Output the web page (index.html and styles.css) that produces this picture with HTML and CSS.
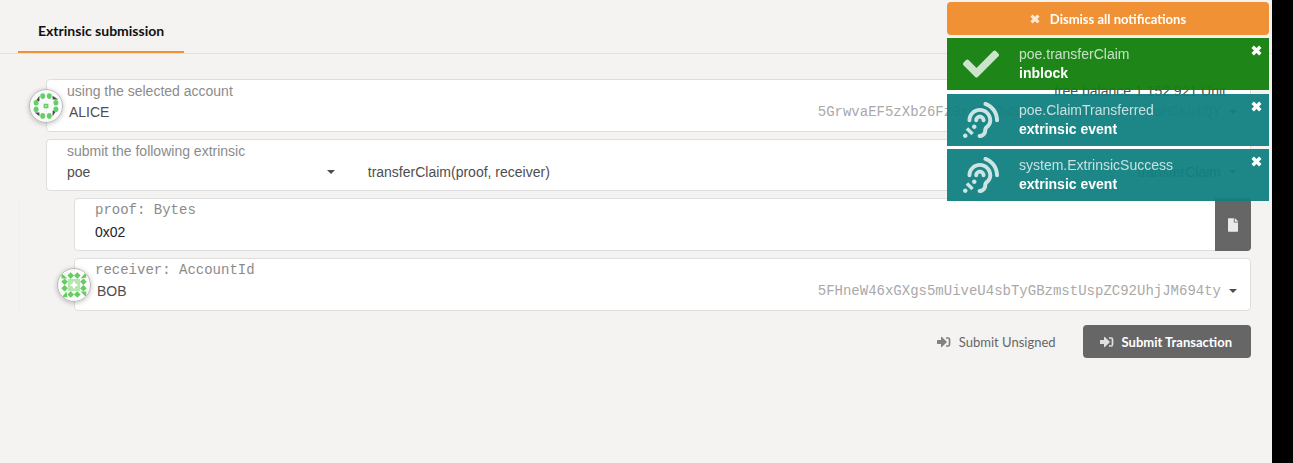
FILE: index.html
```html
<!DOCTYPE html>
<html lang="en">
<head>
<meta charset="utf-8">
<title>Extrinsic submission</title>
<link rel="stylesheet" href="styles.css">
</head>
<body>
<svg class="sprite" aria-hidden="true">
  <symbol id="times" viewBox="0 0 11 11"><path d="M1.700 1.700l7.600 7.600M9.300 1.700l-7.600 7.600" fill="none" stroke="currentColor" stroke-width="3.400"/></symbol>
  <symbol id="check" viewBox="0 0 512 512"><path d="M173.898 439.404l-166.4-166.4c-9.997-9.997-9.997-26.206 0-36.204l36.203-36.204c9.997-9.998 26.207-9.998 36.204 0L192 312.69 432.095 72.596c9.997-9.997 26.207-9.997 36.204 0l36.203 36.204c9.997 9.997 9.997 26.206 0 36.204l-294.4 294.401c-9.998 9.997-26.207 9.997-36.204-.001z"/></symbol>
  <symbol id="listening" viewBox="0 0 512 512"><path d="M216 260c0 15.464-12.536 28-28 28s-28-12.536-28-28c0-44.112 35.888-80 80-80s80 35.888 80 80c0 15.464-12.536 28-28 28s-28-12.536-28-28c0-13.234-10.767-24-24-24s-24 10.766-24 24zm24-176c-97.047 0-176 78.953-176 176 0 15.464 12.536 28 28 28s28-12.536 28-28c0-66.168 53.832-120 120-120s120 53.832 120 120c0 75.164-71.009 70.311-71.997 143.622L288 404c0 28.673-23.327 52-52 52-15.464 0-28 12.536-28 28s12.536 28 28 28c59.475 0 107.876-48.328 108-107.774.595-34.428 72-48.24 72-144.226 0-97.047-78.953-176-176-176zm-80 236c-17.673 0-32 14.327-32 32s14.327 32 32 32 32-14.327 32-32-14.327-32-32-32zM32 448c-17.673 0-32 14.327-32 32s14.327 32 32 32 32-14.327 32-32-14.327-32-32-32zm480-187.993c0-1.518-.012-3.025-.045-4.531C510.076 140.525 436.157 38.47 327.994 1.511c-14.633-4.998-30.549 2.809-35.55 17.442-5 14.633 2.81 30.549 17.442 35.55 85.906 29.354 144.61 110.513 146.077 201.953l.003.188c.026 1.118.033 2.236.033 3.363 0 15.464 12.536 28 28 28s28.001-12.536 28.001-28zM152.971 439.029l-80-80L39.03 392.97l80 80 33.941-33.941z"/></symbol>
  <symbol id="sign-in" viewBox="0 0 14 12"><path d="M.5 4H4V1.200q.3-.6.900-.2l4.700 4.600q.3.400 0 .8L4.900 11q-.6.400-.9-.2V8H.5Q0 8 0 7.500v-3Q0 4 .5 4z"/><path d="M9 2h2q1.500 0 1.500 1.500v5Q12.500 10 11 10H9" fill="none" stroke="currentColor" stroke-width="1.700"/></symbol>
  <symbol id="file" viewBox="0 0 384 512"><path d="M224 136V0H24C10.7 0 0 10.7 0 24v464c0 13.3 10.7 24 24 24h336c13.3 0 24-10.7 24-24V160H248c-13.2 0-24-10.8-24-24zm160-14.1v6.1H256V0h6.1c6.4 0 12.5 2.5 17 7l97.9 98c4.5 4.5 7 10.6 7 16.9z"/></symbol>
  <symbol id="caret" viewBox="0 0 8 4"><path d="M0 0h8L4 4z"/></symbol>
</svg>

<main class="page">
  <nav class="tabs"><a class="tab" href="#submission">Extrinsic submission</a></nav>

  <form class="form" id="submission">
    <div class="card">
      <svg class="identicon" viewBox="0 0 34 34" aria-hidden="true">
        <g fill="#4a4a4a"><path d="M10 6v6H6zM24 6l6 4h-6zM10 24v4l-5-4zM24 28v-6h4z"/></g>
        <g fill="#62d066">
          <ellipse cx="13.500" cy="6.500" rx="2.600" ry="3"/><ellipse cx="20.500" cy="6.500" rx="2.600" ry="3"/>
          <ellipse cx="13.500" cy="27.500" rx="2.600" ry="3"/><ellipse cx="20.500" cy="27.500" rx="2.600" ry="3"/>
          <ellipse cx="6.500" cy="13.500" rx="2.600" ry="3"/><ellipse cx="6.500" cy="20.500" rx="2.600" ry="3"/>
          <ellipse cx="27.500" cy="13.500" rx="2.600" ry="3"/><ellipse cx="27.500" cy="20.500" rx="2.600" ry="3"/>
          <path d="M14.500 14.500h5v5h-5z"/>
        </g>
        <path d="M16 16h2v2h-2z" fill="#a6e4a6"/>
      </svg>
      <div class="field">
        <div class="labels"><label for="account">using the selected account</label><span class="balance">free balance 1,152.921 Unit</span></div>
        <div class="picker named">
          <select id="account"><option>ALICE</option></select>
          <span class="aside mono">5GrwvaEF5zXb26Fz9rcQpDWS57CtERHpNehXCPcNoHGKutQY</span>
          <svg class="caret"><use href="#caret"/></svg>
        </div>
      </div>
    </div>

    <div class="card split">
      <div class="field section">
        <div class="labels"><label for="module">submit the following extrinsic</label></div>
        <div class="picker">
          <select id="module"><option>poe</option></select>
          <svg class="caret"><use href="#caret"/></svg>
        </div>
      </div>
      <div class="field method">
        <div class="picker">
          <select id="method" aria-label="method"><option>transferClaim(proof, receiver)</option></select>
          <span class="aside">transferClaim</span>
          <svg class="caret"><use href="#caret"/></svg>
        </div>
      </div>
    </div>

    <div class="params">
      <div class="card">
        <div class="field">
          <div class="labels mono"><label for="proof">proof: Bytes</label></div>
          <input class="bytes" id="proof" type="text" value="0x02">
        </div>
        <button class="upload" type="button" aria-label="Load from file"><svg><use href="#file"/></svg></button>
      </div>
      <div class="card">
        <svg class="identicon" viewBox="0 0 34 34" aria-hidden="true">
          <path d="M10.500 10.500h13v13h-13z" fill="#b4e7ae"/>
          <path d="M17 12.500l1.500 3 3 1.500-3 1.500-1.500 3-1.500-3-3-1.500 3-1.500z" fill="#fff"/>
          <g fill="#66cc60">
            <path d="M3 4l7 6H4zM30 3v6l-6 1zM4 30l5-6 1 6zM24 24h6v6z"/>
            <path d="M13.500 3.500l3.500 3.500 3.500-3.500L24 7l-3.500 3.500L17 7l-3.500 3.500L10 7zM13.500 23.500l3.500 3.500 3.500-3.500L24 27l-3.500 3.500L17 27l-3.500 3.500L10 27z"/>
            <path d="M7 10l3.500 3.500L7 17l3.500 3.500L7 24l-3.500-3.500L7 17l-3.500-3.500zM27 10l3.500 3.500L27 17l3.500 3.500L27 24l-3.500-3.500L27 17l-3.500-3.500z"/>
          </g>
        </svg>
        <div class="field">
          <div class="labels mono"><label for="receiver">receiver: AccountId</label></div>
          <div class="picker named">
            <select id="receiver"><option>BOB</option></select>
            <span class="aside mono">5FHneW46xGXgs5mUiveU4sbTyGBzmstUspZC92UhjJM694ty</span>
            <svg class="caret"><use href="#caret"/></svg>
          </div>
        </div>
      </div>
    </div>

    <div class="actions">
      <button class="button" type="button"><svg><use href="#sign-in"/></svg>Submit Unsigned</button>
      <button class="button primary" type="button"><svg><use href="#sign-in"/></svg>Submit Transaction</button>
    </div>
  </form>
</main>

<aside class="notifications">
  <button class="dismiss" type="button"><svg><use href="#times"/></svg>Dismiss all notifications</button>
  <div class="notice success">
    <svg class="notice-icon"><use href="#check"/></svg>
    <div class="notice-text"><span class="notice-title">poe.transferClaim</span><strong>inblock</strong></div>
    <button class="close" type="button" aria-label="Close"><svg><use href="#times"/></svg></button>
  </div>
  <div class="notice">
    <svg class="notice-icon"><use href="#listening"/></svg>
    <div class="notice-text"><span class="notice-title">poe.ClaimTransferred</span><strong>extrinsic event</strong></div>
    <button class="close" type="button" aria-label="Close"><svg><use href="#times"/></svg></button>
  </div>
  <div class="notice">
    <svg class="notice-icon"><use href="#listening"/></svg>
    <div class="notice-text"><span class="notice-title">system.ExtrinsicSuccess</span><strong>extrinsic event</strong></div>
    <button class="close" type="button" aria-label="Close"><svg><use href="#times"/></svg></button>
  </div>
</aside>
</body>
</html>
```
FILE: styles.css
```css
* { box-sizing: border-box; }

body {
  margin: 0;
  background: #000;
  color: #4e4e4e;
  font: 14px/20px "Liberation Sans", Arial, sans-serif;
}

svg { fill: currentColor; }
.sprite { display: none; }
.mono { font-family: "Liberation Mono", "Courier New", monospace; }

button, select, input {
  margin: 0;
  padding: 0;
  border: 0;
  background: none;
  color: inherit;
  font: inherit;
}

.page {
  min-height: 100vh;
  margin-right: 21px;
  background: #f4f3f2;
}

.tabs {
  display: flex;
  padding: 9px 18px 0;
  border-bottom: 1px solid #e2e2e2;
}

.tab {
  padding: 12px 20px 10px;
  border-bottom: 2px solid #f19135;
  color: #111;
  font: 700 14px/20px Lato, sans-serif;
  text-decoration: none;
}

.form {
  display: flex;
  flex-direction: column;
  gap: 7px;
  padding: 25px 21px 0 18px;
}

.form > .card { margin-left: 28px; }

.card {
  position: relative;
  display: flex;
  min-height: 53px;
  border: 1px solid #dededf;
  border-radius: 4px;
  background: #fff;
}

.card.split { min-height: 52px; }

.identicon {
  position: absolute;
  top: 9px;
  left: -18px;
  width: 34px;
  height: 34px;
  border: 1px solid #bbb;
  border-radius: 50%;
  background: rgba(250, 250, 250, 0.8);
  box-shadow: 0 1px 5px rgba(0, 0, 0, 0.25);
}

.field {
  flex: 1;
  min-width: 0;
  padding: 2px 13px 0 20px;
}

.section { flex: 0 0 25%; }
.method { padding-top: 21px; }

.labels {
  display: flex;
  justify-content: space-between;
  padding-right: 11px;
  color: #8b8b8b;
  line-height: 19px;
}

.balance { color: #4e4e4e; }

.picker {
  display: grid;
  grid-template-columns: 1fr auto 8px;
  column-gap: 8px;
  align-items: center;
}

.picker > * { grid-row: 1; }

.picker select {
  grid-column: 1 / -1;
  height: 22px;
  appearance: none;
  outline: 0;
}

.named select { padding-left: 2px; }

.aside { grid-column: 2; pointer-events: none; }
.aside.mono { color: #a9a9a9; }

.caret {
  grid-column: 3;
  width: 8px;
  height: 4px;
  pointer-events: none;
}

.bytes {
  width: 100%;
  height: 24px;
  color: #222;
  outline: 0;
}

.params {
  display: flex;
  flex-direction: column;
  gap: 7px;
  margin-bottom: 7px;
  padding-left: 54px;
  border-left: 2px solid #f1f1f2;
}

.upload {
  display: grid;
  place-items: center;
  width: 36px;
  margin: -1px;
  border-radius: 0 4px 4px 0;
  background: #666;
  color: #eaeaea;
}

.upload svg { width: 10px; height: 14px; }

.actions {
  display: flex;
  justify-content: flex-end;
  gap: 8px;
}

.button {
  display: flex;
  align-items: center;
  gap: 8px;
  height: 33px;
  padding: 0 19px 0 17px;
  border-radius: 4px;
  color: #666;
  font: 13px/20px Lato, sans-serif;
}

.button svg { width: 14px; height: 12px; opacity: 0.8; }

.primary {
  background: #666;
  color: #fff;
  font-weight: 700;
}

.notifications {
  position: fixed;
  top: 2px;
  right: 24px;
  display: flex;
  flex-direction: column;
  gap: 3px;
  width: 322px;
  color: #fff;
}

.dismiss {
  display: flex;
  justify-content: center;
  align-items: center;
  gap: 10px;
  height: 33px;
  border-radius: 4px;
  background: #f19135;
  font: 700 13px/20px Lato, sans-serif;
}

.dismiss svg { width: 10px; height: 10px; opacity: 0.8; }

.notice {
  display: flex;
  align-items: center;
  height: 52px;
  padding-left: 16px;
  background: rgba(17, 128, 127, 0.95);
}

.notice.success {
  margin-bottom: 1px;
  background: rgba(18, 128, 13, 0.95);
}

.notice-icon {
  width: 36px;
  height: 36px;
  margin-right: 20px;
  opacity: 0.78;
}

.notice-text {
  display: flex;
  flex: 1;
  flex-direction: column;
  line-height: 19px;
}

.notice-title { opacity: 0.75; }

.close {
  align-self: flex-start;
  padding: 7px;
}

.close svg { display: block; width: 11px; height: 11px; }
```
